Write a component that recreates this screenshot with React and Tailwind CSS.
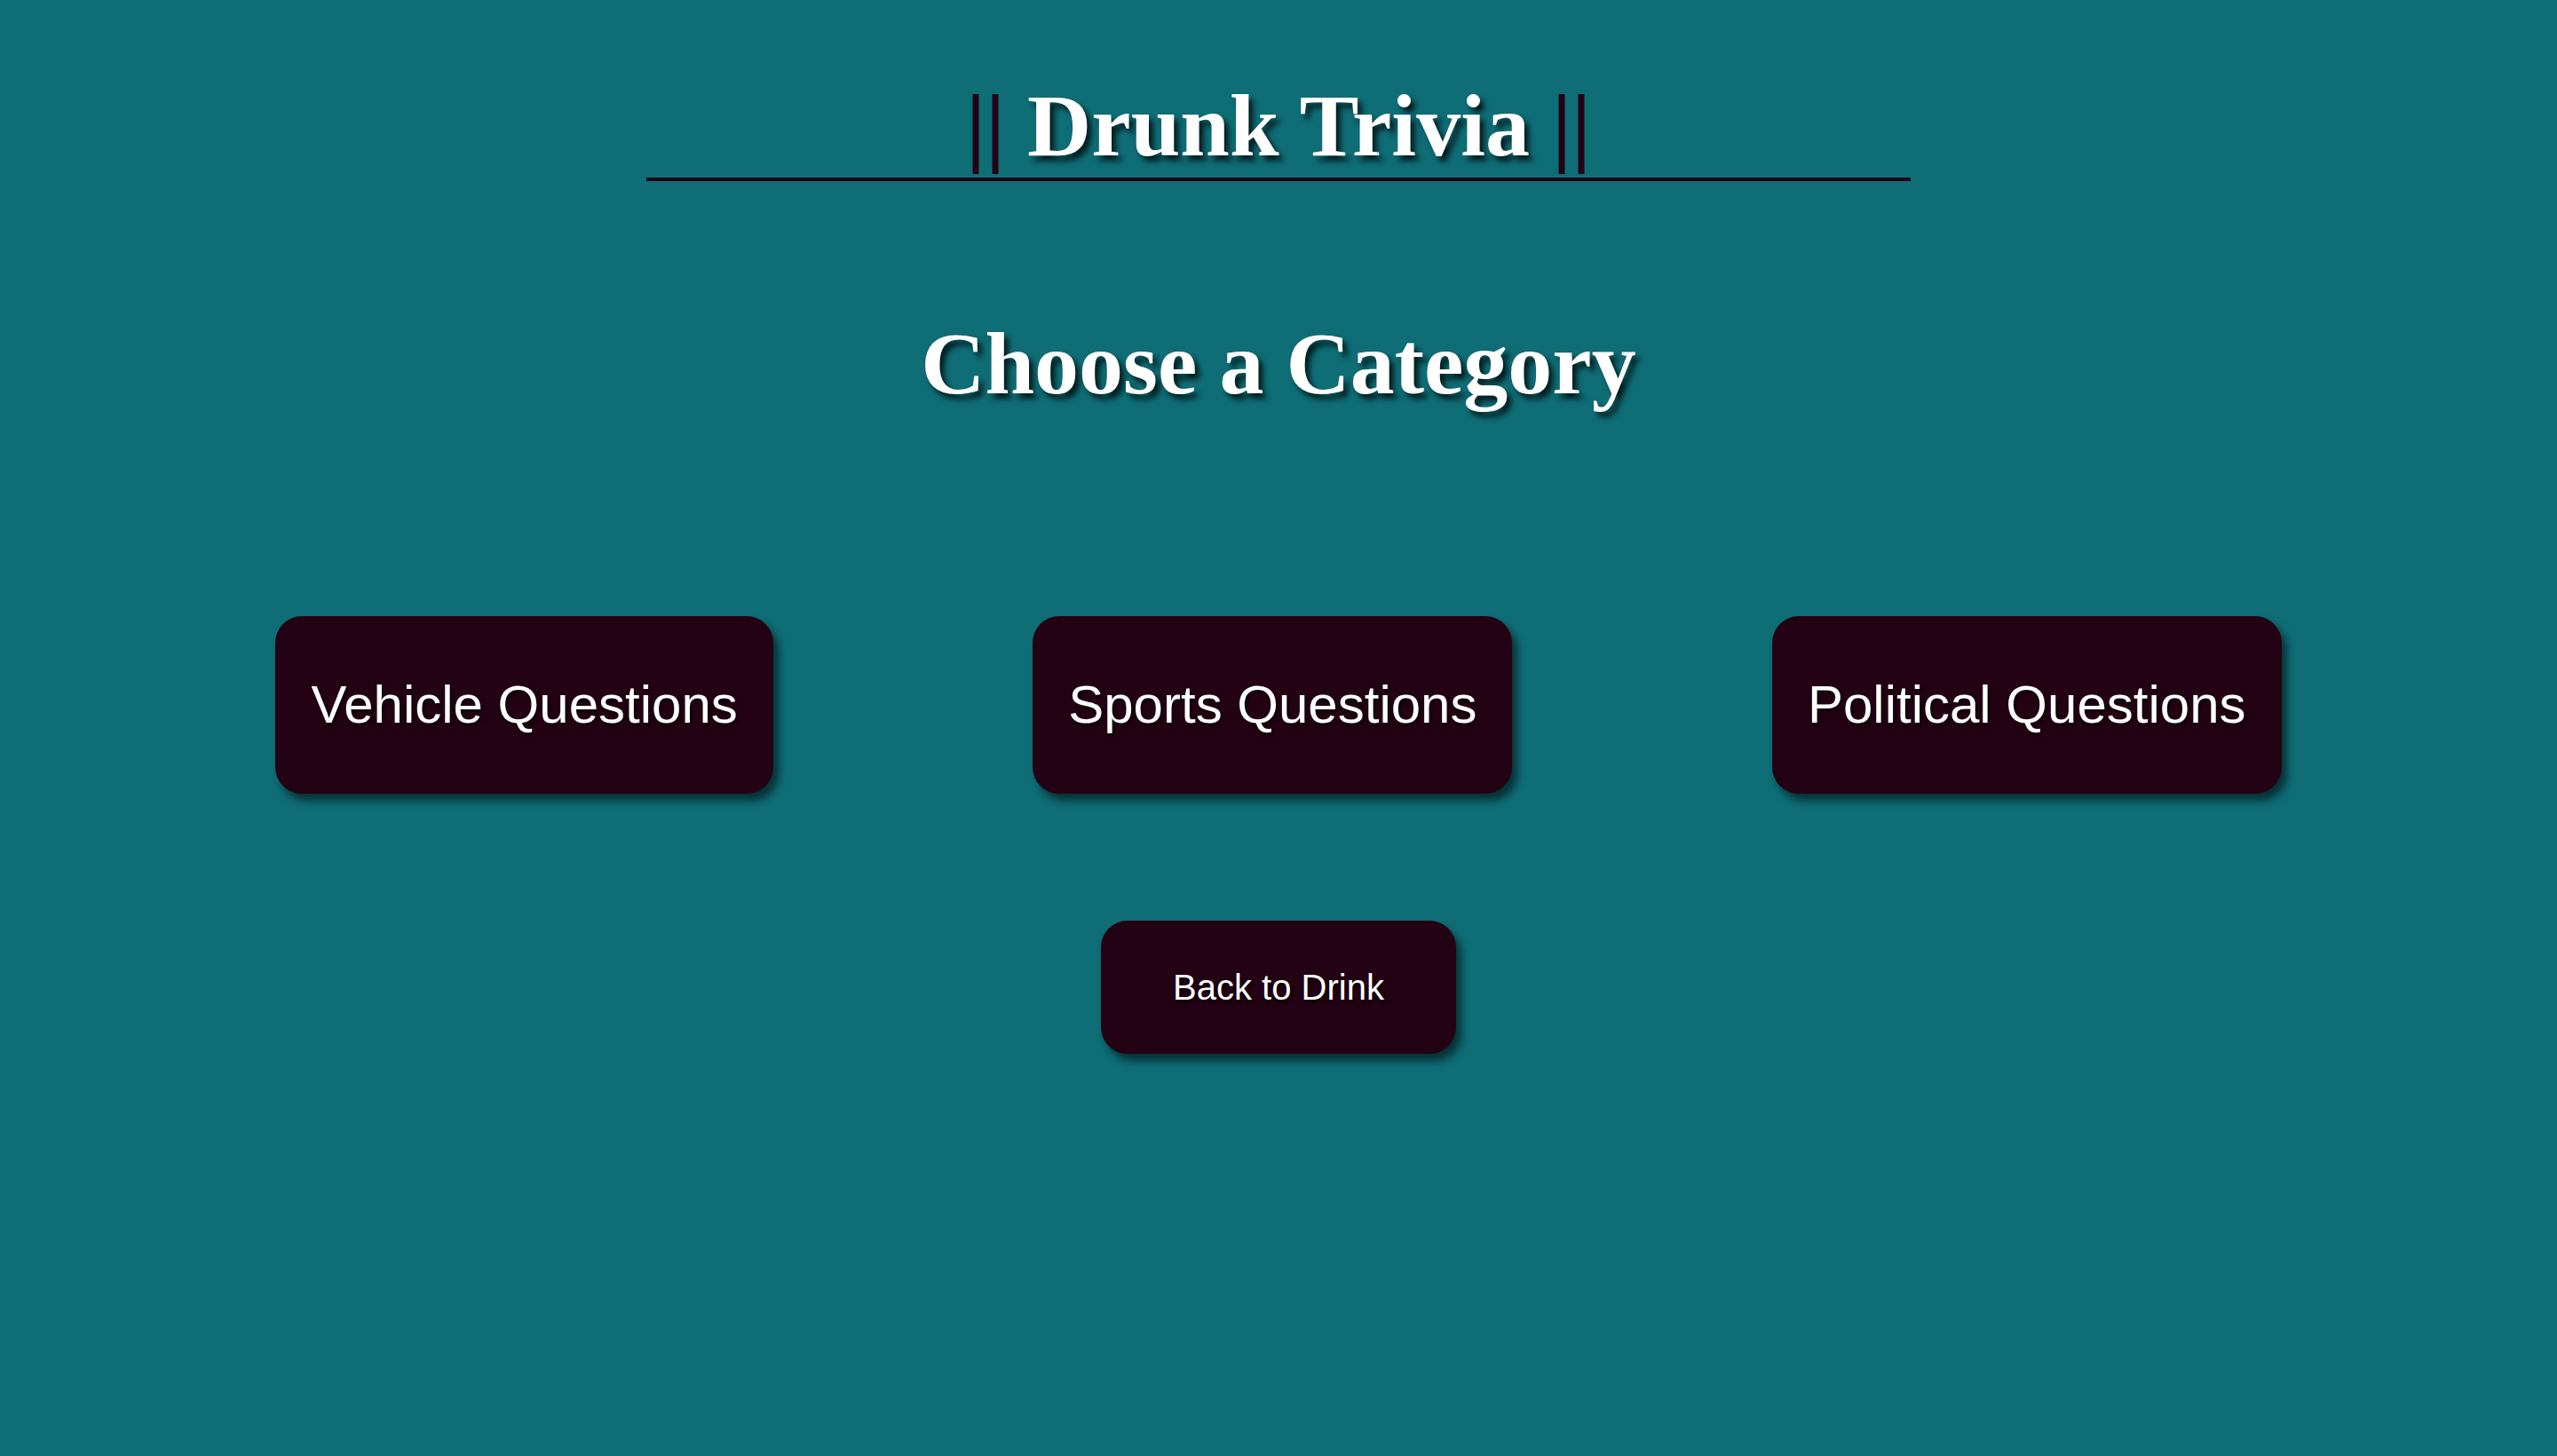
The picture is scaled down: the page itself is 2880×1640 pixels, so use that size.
// Drunk Trivia — category picker
const CATEGORIES = ["Vehicle Questions", "Sports Questions", "Political Questions"];

const serif = "font-['Liberation_Serif','Times_New_Roman',serif]";
const sans = "font-['Liberation_Sans',Arial,sans-serif]";

function CategoryButton({ label }) {
  return (
    <button
      className={`${sans} flex h-[200px] items-center rounded-[30px] bg-[#230313] px-[40px] text-[60px] text-white shadow-[6px_8px_10px_rgba(0,0,0,0.55)] [text-shadow:2px_3px_4px_rgba(0,0,0,0.7)]`}
    >
      {label}
    </button>
  );
}

export default function App() {
  return (
    <div className="min-h-screen w-full bg-[#0f6d76]">
      <div className="flex flex-col items-center">
        <h1
          className={`${serif} mt-[84px] w-[1424px] border-b-4 border-[#230313] pb-px text-center text-[100px] font-bold leading-[1.15] text-white`}
        >
          <span className="text-[#230313]">||</span>{" "}
          <span className="[text-shadow:5px_6px_6px_rgba(0,0,0,0.75)]">Drunk Trivia</span>{" "}
          <span className="text-[#230313]">||</span>
        </h1>

        <h2
          className={`${serif} mt-[148px] text-center text-[100px] font-bold leading-[1.15] text-white [text-shadow:5px_6px_6px_rgba(0,0,0,0.75)]`}
        >
          Choose a Category
        </h2>
      </div>

      <div className="mt-[227px] flex justify-evenly px-[18px]">
        {CATEGORIES.map((c) => (
          <CategoryButton key={c} label={c} />
        ))}
      </div>

      <div className="mt-[143px] flex justify-center">
        <button
          className={`${sans} flex h-[150px] w-[400px] items-center justify-center rounded-[30px] bg-[#230313] text-[40px] text-white shadow-[6px_8px_10px_rgba(0,0,0,0.55)] [text-shadow:2px_3px_4px_rgba(0,0,0,0.7)]`}
        >
          Back to Drink
        </button>
      </div>
    </div>
  );
}
